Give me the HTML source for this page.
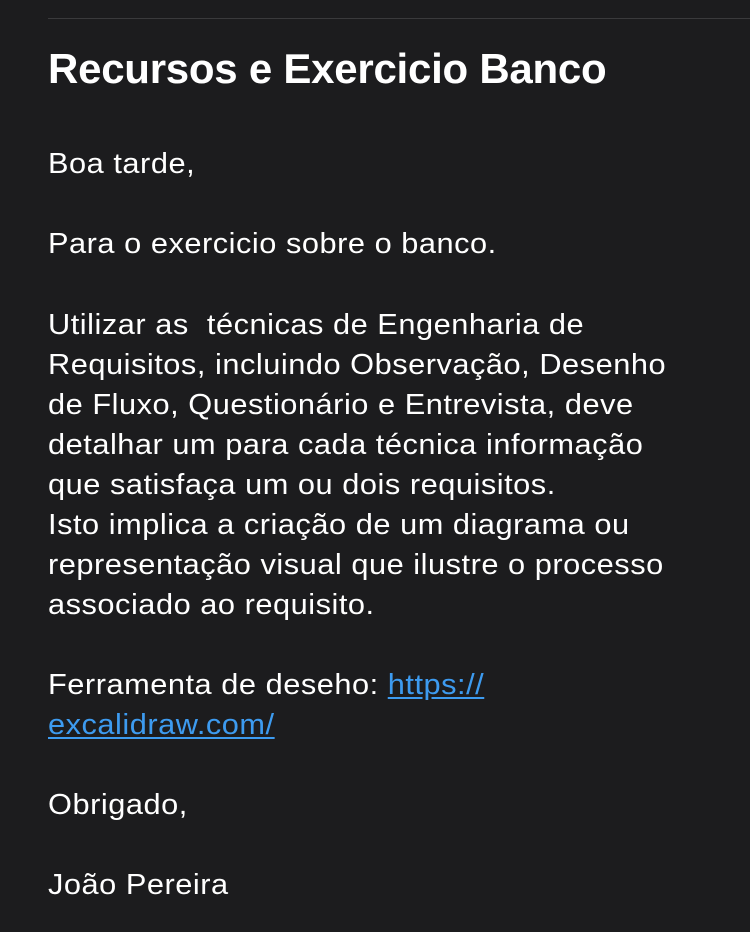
<!DOCTYPE html>
<html><head><meta charset="utf-8"><style>
html,body{margin:0;padding:0;background:#1c1c1e;width:750px;height:932px;overflow:hidden}
.hr{position:absolute;left:48px;right:0;top:18px;height:1px;background:#3a3a3c}
.t{position:absolute;left:48px;top:44px;font:bold 42px/50px "Liberation Sans",sans-serif;color:#fff;white-space:nowrap;letter-spacing:-0.25px}
.l{position:absolute;left:48px;font:29px/40px "Liberation Sans",sans-serif;color:#fff;white-space:nowrap;letter-spacing:0.5px;transform:scaleX(1.06);transform-origin:0 0}
a{color:#3d9bf0;text-decoration:underline;text-underline-offset:3px}
</style></head><body>
<div class="hr"></div>
<div class="t">Recursos e Exercicio Banco</div>
<div class="l" style="top:144px">Boa tarde,</div>
<div class="l" style="top:224px">Para o exercicio sobre o banco.</div>
<div class="l" style="top:305px">Utilizar as&nbsp; técnicas de Engenharia de<br>Requisitos, incluindo Observação, Desenho<br>de Fluxo, Questionário e Entrevista, deve<br>detalhar um para cada técnica informação<br>que satisfaça um ou dois requisitos.<br>Isto implica a criação de um diagrama ou<br>representação visual que ilustre o processo<br>associado ao requisito.</div>
<div class="l" style="top:665px">Ferramenta de deseho: <a>https://</a><br><a>excalidraw.com/</a></div>
<div class="l" style="top:785px">Obrigado,</div>
<div class="l" style="top:865px">João Pereira</div>
</body></html>
